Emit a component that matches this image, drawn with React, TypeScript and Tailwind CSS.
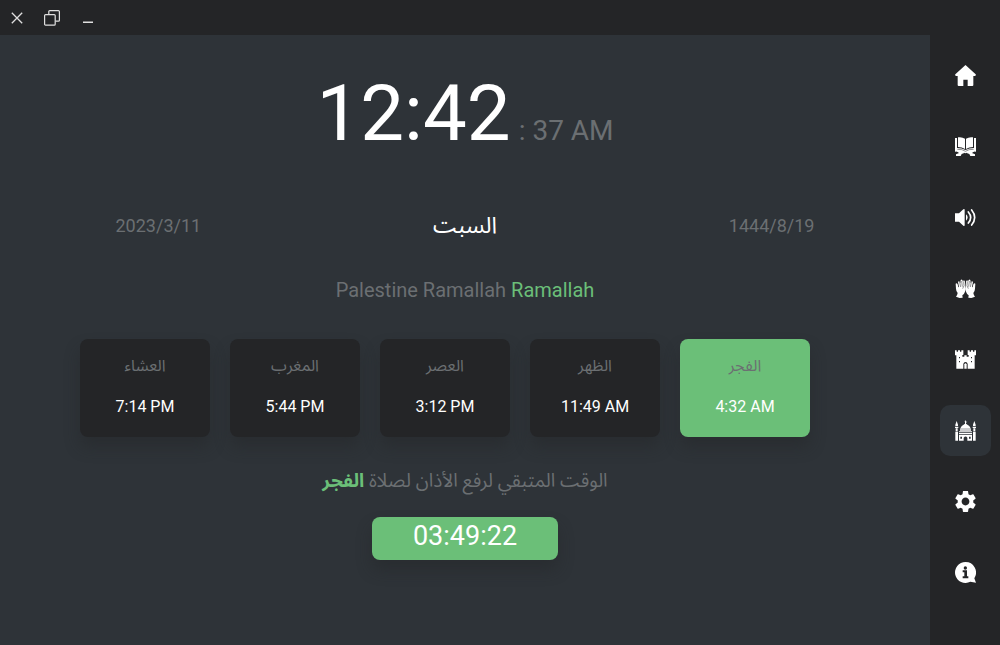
import type { ReactNode } from "react";

const prayers = [
  { name: "العشاء", time: "7:14 PM" },
  { name: "المغرب", time: "5:44 PM" },
  { name: "العصر", time: "3:12 PM" },
  { name: "الظهر", time: "11:49 AM" },
  { name: "الفجر", time: "4:32 AM", next: true },
];

function Icon({ children, viewBox = "0 0 63 63" }: { children: ReactNode; viewBox?: string }) {
  return (
    <svg viewBox={viewBox} className="size-[21px]" fill="currentColor" aria-hidden="true">
      {children}
    </svg>
  );
}

const HomeIcon = () => (
  <Icon>
    <path d="M31.500 0 62 28q2 3-2 5h-5v27q0 3-3 3H38V44H25v19H11q-3 0-3-3V33H3q-4-2-2-5z" />
  </Icon>
);

const QuranIcon = () => (
  <Icon>
    <path d="M9 4q12-2 21 4v31q-9-6-21-6zM54 4q-12-2-21 4v31q9-6 21-6z" />
    <path d="M0 6h6v30q15 0 25.500 6Q42 36 57 36V6h6v41q-20-1-31.500 5Q20 46 0 47z" />
    <path d="M4 45h20l4 6-8 3-3 6H3v-5l9-4zM59 45H39l-4 6 8 3 3 6h14v-5l-9-4z" />
    <path d="M7 40q15-1 24.500 6Q41 39 56 40" fill="none" stroke="#242527" strokeWidth="1.500" />
  </Icon>
);

const SoundIcon = () => (
  <Icon>
    <path d="M0 19h12L25 7q4-3 4 2v45q0 5-4 2L12 44H0z" />
    <path d="M33 22q10 9.500 0 19z" />
    <path d="M40 15q14 16.500 0 33M50 9q18 22.500 0 45" fill="none" stroke="currentColor" strokeWidth="5" strokeLinecap="round" />
  </Icon>
);

const HandShape = () => (
  <>
    <path d="M3 56q4-5 5-11-5-7-5-13l-1-15q3-3 6 2l2 9 2-1-3-15q2-4 5-1l2 5 1-10q3-3 5 0l2 5 2-4q4 0 4 5l1 14q3 7-1 15-3 9-8 11l1 7-9 1z" />
    <path d="M14 12l3 15M20 9l2 17M26 11l1 12-4 9" fill="none" stroke="#242527" strokeWidth="1.500" />
  </>
);

const HandsIcon = () => (
  <Icon>
    <HandShape />
    <g transform="matrix(-1 0 0 1 63 0)">
      <HandShape />
    </g>
  </Icon>
);

const CastleIcon = () => (
  <Icon>
    <path
      fillRule="evenodd"
      d="M0 4h5v4h4V4h6v4h4V4h6v14h-3v5h6v-4h7v4h6v-5h-3V4h6v4h4V4h6v4h4V4h5v15h-4v40H38V45q-1-6-6.500-6T25 45v14H4V19H0zM12 24v4h3v-4zM48 24v4h3v-4zM12 36v4h3v-4zM48 36v4h3v-4z"
    />
    <path d="M28 59V46q3.500-6 7 0v13z" />
  </Icon>
);

const MosqueIcon = () => (
  <Icon>
    <path d="M5 3 1 14v4h8v-4zM0 20h10v4H0zM2 25h6v9H2zM1 35h8v27H1zM58 3l-4 11v4h8v-4zM53 20h10v4H53zM55 25h6v9h-6zM54 35h8v27h-8z" />
    <path d="M32 1q-5 2-2 6v4q-12 6-15 15h33q-3-9-15-15V8l4-3q-5 2-5-4zM15 28h33v4H15zM12 34h39v3H12zM12 39h39v4H12z" />
    <path fillRule="evenodd" d="M12 45h39v17H37V53q-5-7-11 0v9H12zM16 50v6h5v-6zM42 50v6h5v-6z" />
  </Icon>
);

const GearIcon = () => (
  <Icon viewBox="2.3 2.4 19.4 19.2">
    <path d="M19.14 12.94c.04-.3.06-.61.06-.94 0-.32-.02-.64-.07-.94l2.030-1.580c.18-.14.23-.41.12-.61l-1.920-3.320c-.12-.22-.37-.29-.59-.22l-2.390.96c-.5-.38-1.030-.7-1.620-.94l-.36-2.540c-.04-.24-.24-.41-.48-.41h-3.840c-.24 0-.43.17-.47.41l-.36 2.540c-.59.24-1.130.57-1.620.94l-2.390-.96c-.22-.08-.47 0-.59.22L2.740 8.870c-.12.21-.08.47.12.61l2.030 1.580c-.05.3-.09.63-.09.94s.02.64.07.94l-2.030 1.580c-.18.14-.23.41-.12.61l1.920 3.320c.12.22.37.29.59.22l2.390-.96c.5.38 1.030.7 1.620.94l.36 2.540c.05.24.24.41.48.41h3.840c.24 0 .44-.17.47-.41l.36-2.540c.59-.24 1.130-.56 1.620-.94l2.390.96c.22.08.47 0 .59-.22l1.920-3.320c.12-.22.07-.47-.12-.61l-2.010-1.580zM12 15.600c-1.980 0-3.600-1.620-3.600-3.600s1.620-3.600 3.600-3.600 3.600 1.620 3.600 3.600-1.620 3.600-3.600 3.600z" />
  </Icon>
);

const InfoIcon = () => (
  <Icon>
    <path d="M31.500 0A31.500 31.500 0 1 0 46 59.500l17 3-5-14A31.500 31.500 0 0 0 31.500 0z" />
    <circle cx="31" cy="18" r="5" fill="#242527" />
    <path d="M23 25h13v18h4v6H23v-6h5V31h-5z" fill="#242527" />
  </Icon>
);

const navItems = [
  { label: "الرئيسية", icon: <HomeIcon /> },
  { label: "القرآن", icon: <QuranIcon /> },
  { label: "الصوتيات", icon: <SoundIcon /> },
  { label: "الأدعية", icon: <HandsIcon /> },
  { label: "حصن المسلم", icon: <CastleIcon /> },
  { label: "مواقيت الصلاة", icon: <MosqueIcon />, active: true },
  { label: "الإعدادات", icon: <GearIcon /> },
  { label: "حول", icon: <InfoIcon /> },
];

function TitleBar() {
  return (
    <header className="flex h-[35px] items-center bg-[#242527] text-[#e0e0e0]">
      <button type="button" aria-label="Close" className="grid h-full w-[34px] place-items-center">
        <svg viewBox="0 0 12 12" className="size-3" fill="none" stroke="currentColor" strokeWidth="1.300" aria-hidden="true">
          <path d="M.8.8l10.400 10.400M11.200.8.8 11.200" />
        </svg>
      </button>
      <button type="button" aria-label="Restore" className="grid h-full w-[36px] place-items-center">
        <svg viewBox="0 0 16 16" className="size-4" fill="none" stroke="currentColor" strokeWidth="1.200" aria-hidden="true">
          <rect x=".6" y="4.600" width="10.600" height="10.600" rx="1" />
          <path d="M4.800 4.600V1.600q0-1 1-1h8.600q1 0 1 1v8.600q0 1-1 1h-3" />
        </svg>
      </button>
      <button type="button" aria-label="Minimize" className="grid h-full w-[35px] place-items-center">
        <svg viewBox="0 0 10 10" className="size-[10px]" fill="currentColor" aria-hidden="true">
          <path d="M0 8.500h10v1.500H0z" />
        </svg>
      </button>
    </header>
  );
}

function SideNav() {
  return (
    <nav className="w-[70px] shrink-0 bg-[#242527] px-[10px] pt-[15px]">
      <ul className="flex flex-col gap-5">
        {navItems.map((item) => (
          <li key={item.label}>
            <button
              type="button"
              aria-label={item.label}
              aria-current={item.active ? "page" : undefined}
              className={
                "grid size-[51px] place-items-center rounded-[10px] text-white " +
                (item.active ? "bg-[#2e3338]" : "")
              }
            >
              {item.icon}
            </button>
          </li>
        ))}
      </ul>
    </nav>
  );
}

export default function App() {
  return (
    <div className="flex min-h-screen flex-col bg-[#2e3338] font-['Roboto','Noto_Sans_Arabic','Noto_Sans','DejaVu_Sans',sans-serif] text-white">
      <TitleBar />
      <div className="flex grow">
        <main className="flex grow flex-col text-[#6b6f72]">
          <h1 className="mt-8 flex items-baseline justify-center gap-2 leading-[94px]">
            <span className="text-[78px] text-white">12:42</span>
            <span className="text-[28px]">: 37 AM</span>
          </h1>

          <div className="mt-[30px] grid grid-cols-3 items-center px-[5px] text-center text-lg leading-9">
            <time>2023/3/11</time>
            <h2 lang="ar" dir="rtl" className="text-[23px] leading-9 text-white">السبت</h2>
            <time>1444/8/19</time>
          </div>

          <p className="mt-[30px] text-center text-xl leading-8">
            Palestine Ramallah <span className="text-[#6bbf78]">Ramallah</span>
          </p>

          <ul className="mt-[33px] grid grid-cols-5 gap-5 pr-[120px] pl-20">
            {prayers.map((p) => (
              <li
                key={p.name}
                className={
                  "flex h-[98px] flex-col items-center gap-[17px] rounded-lg pt-[15px] text-base leading-6 shadow-[0_10px_15px_rgba(36,37,39,0.45)] " +
                  (p.next ? "bg-[#6bbf78]" : "bg-[#242527]")
                }
              >
                <h3 lang="ar" dir="rtl">{p.name}</h3>
                <time className="text-white">{p.time}</time>
              </li>
            ))}
          </ul>

          <p lang="ar" dir="rtl" className="mt-7 text-center text-[19px] leading-8">
            الوقت المتبقي لرفع الأذان لصلاة <b className="text-[#6bbf78]">الفجر</b>
          </p>

          <div className="mt-5 self-center rounded-lg bg-[#6bbf78] px-[41px] pb-1 text-[27px] leading-[39px] text-white shadow-[0_10px_15px_rgba(36,37,39,0.45)]">
            <time>03:49:22</time>
          </div>
        </main>
        <SideNav />
      </div>
    </div>
  );
}
